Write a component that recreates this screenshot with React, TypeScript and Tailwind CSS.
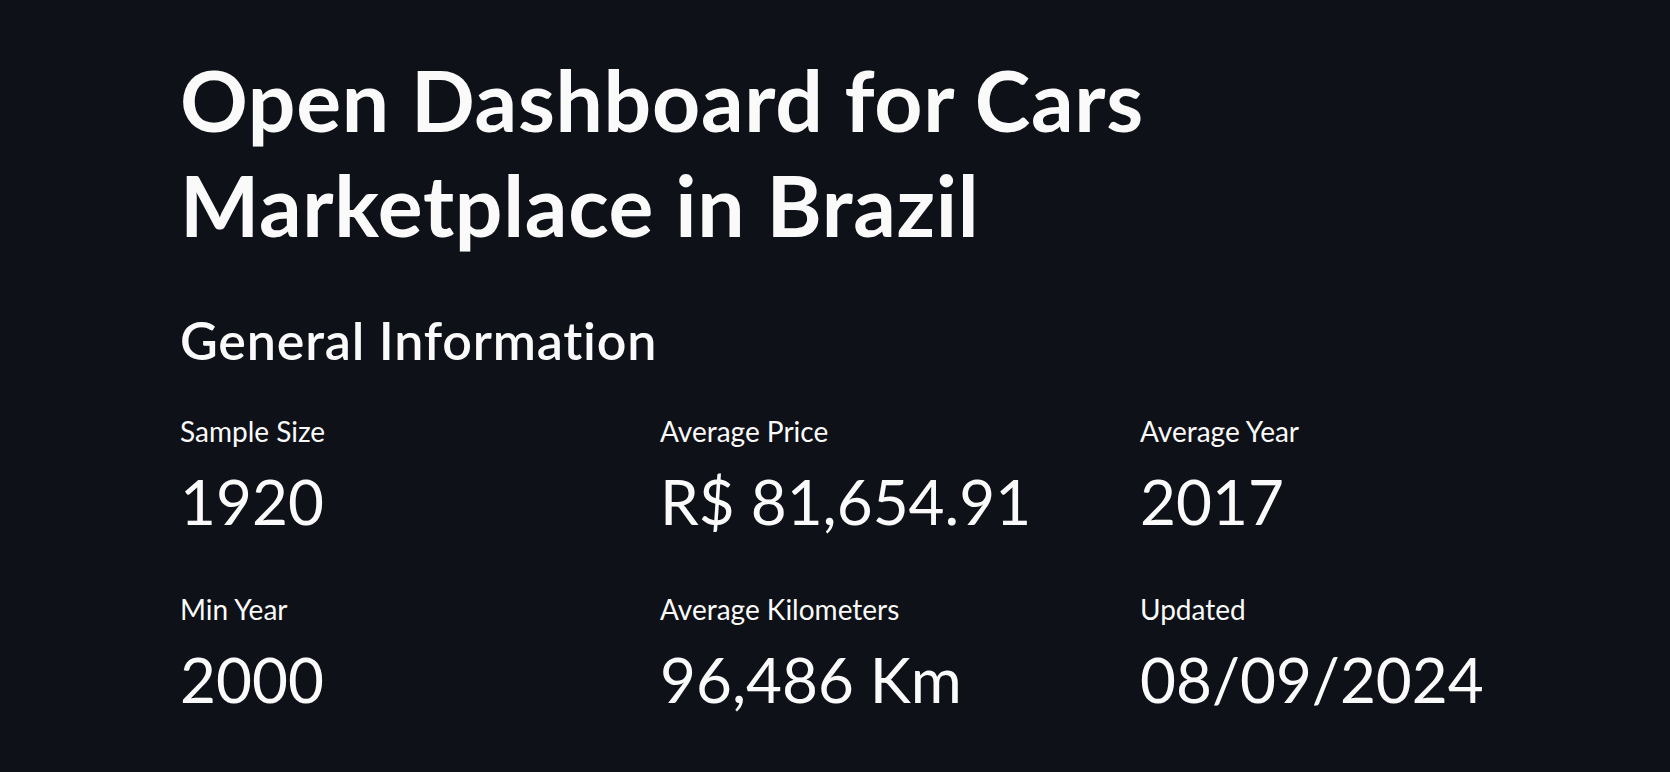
import React from "react";

const metrics = [
  { label: "Sample Size", value: "1920" },
  { label: "Average Price", value: "R$ 81,654.91" },
  { label: "Average Year", value: "2017" },
  { label: "Min Year", value: "2000" },
  { label: "Average Kilometers", value: "96,486 Km" },
  { label: "Updated", value: "08/09/2024" },
];

export default function App() {
  return (
    <div
      className="min-h-[772px] w-full bg-[#0e1117] text-[#fafafa] overflow-hidden [font-variant-ligatures:none]"
      style={{ fontFamily: "Lato, 'Noto Sans', sans-serif" }}
    >
      <div className="pl-[180px] pt-[47px] w-[1588px]">
        <h1 className="text-[84px] font-bold leading-[105px] tracking-[0.7px] w-[1050px]">
          Open Dashboard for Cars Marketplace in Brazil
        </h1>
        <h3 className="mt-[52px] text-[52px] font-semibold leading-[62px] tracking-[0.8px]">
          General Information
        </h3>
        <div className="mt-[40px] grid grid-cols-3 gap-x-[32px] gap-y-[38px]">
          {metrics.map((m) => (
            <div key={m.label} className="flex flex-col">
              <div className="text-[28px] leading-[40px]">{m.label}</div>
              <div className="text-[62px] leading-[100px]">{m.value}</div>
            </div>
          ))}
        </div>
      </div>
    </div>
  );
}
